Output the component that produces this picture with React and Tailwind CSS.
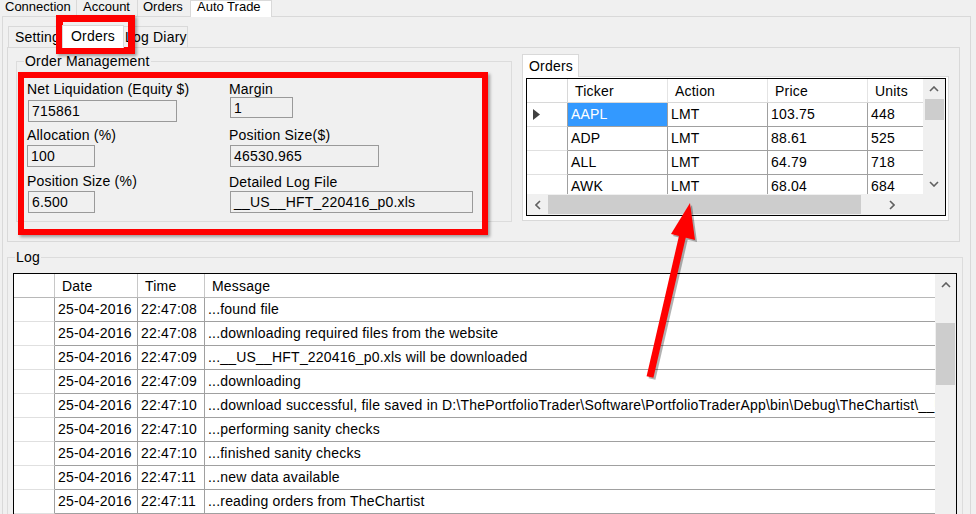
import React from 'react';

const font = "font-['Liberation_Sans',Arial,sans-serif]";

const ChevronUp = () => (
  <svg width="10" height="6" viewBox="0 0 10 6"><polyline points="1,5 5,1 9,5" fill="none" stroke="#606060" strokeWidth="1.6" /></svg>
);
const ChevronDown = () => (
  <svg width="10" height="6" viewBox="0 0 10 6"><polyline points="1,1 5,5 9,1" fill="none" stroke="#606060" strokeWidth="1.6" /></svg>
);
const ChevronLeft = () => (
  <svg width="6" height="10" viewBox="0 0 6 10"><polyline points="5,1 1,5 5,9" fill="none" stroke="#606060" strokeWidth="1.6" /></svg>
);
const ChevronRight = () => (
  <svg width="6" height="10" viewBox="0 0 6 10"><polyline points="1,1 5,5 1,9" fill="none" stroke="#606060" strokeWidth="1.6" /></svg>
);

const Field = ({ value, w, h = 'h-[22px]', mt }) => (
  <div className={`${w} ${h} ${mt} border border-[#9a9a9a] bg-[#f0f0f0] pl-[3px] flex items-center leading-none`}>
    {value}
  </div>
);

const orders = [
  ['AAPL', 'LMT', '103.75', '448'],
  ['ADP', 'LMT', '88.61', '525'],
  ['ALL', 'LMT', '64.79', '718'],
  ['AWK', 'LMT', '68.04', '684'],
];

const logs = [
  ['25-04-2016', '22:47:08', '...found file'],
  ['25-04-2016', '22:47:08', '...downloading required files from the website'],
  ['25-04-2016', '22:47:09', '...__US__HFT_220416_p0.xls will be downloaded'],
  ['25-04-2016', '22:47:09', '...downloading'],
  ['25-04-2016', '22:47:10', '...download successful, file saved in D:\\ThePortfolioTrader\\Software\\PortfolioTraderApp\\bin\\Debug\\TheChartist\\__US__HFT_220416_p0.xls'],
  ['25-04-2016', '22:47:10', '...performing sanity checks'],
  ['25-04-2016', '22:47:10', '...finished sanity checks'],
  ['25-04-2016', '22:47:11', '...new data available'],
  ['25-04-2016', '22:47:11', '...reading orders from TheChartist'],
  ['25-04-2016', '22:47:11', '...placing orders'],
];

export default function App() {
  return (
    <div className={`${font} relative w-[976px] h-[514px] overflow-hidden bg-[#f0f0f0] text-[14px] tracking-[0.2px] text-black`}>
      {/* top tabs */}
      <div className="flex items-end h-[16px] text-[13px] tracking-normal">
        <div className="w-[77px] h-[16px] border-r border-[#d9d9d9] pl-[5px] leading-[14px]">Connection</div>
        <div className="w-[61px] h-[16px] border-r border-[#d9d9d9] pl-[6px] leading-[14px]">Account</div>
        <div className="w-[52px] h-[16px] pl-[5px] leading-[14px]">Orders</div>
        <div className="relative z-10 w-[82px] h-[17px] -mb-px bg-white border border-b-0 border-[#d9d9d9] pl-[6px] leading-[12px]">Auto Trade</div>
      </div>

      {/* outer page */}
      <div className="ml-[2px] w-[969px] h-[500px] border border-[#d9d9d9] pl-[4px] pt-[7px]">
        {/* inner tabs */}
        <div className="flex items-end h-[23px]">
          <div className="ml-[1px] w-[56px] h-[21px] border border-b-0 border-[#d9d9d9] pl-[6px] leading-[20px]">Setting</div>
          <div className="relative z-10 -ml-[2px] w-[62px] h-[23px] -mb-px bg-white border border-b-0 border-[#d9d9d9] pl-[8px] leading-[20px]">Orders</div>
          <div className="-ml-[2px] w-[66px] h-[21px] border border-b-0 border-l-0 border-[#d9d9d9] pl-[3px] leading-[20px] whitespace-nowrap">Log Diary</div>
        </div>

        {/* inner page */}
        <div className="w-[953px] h-[195px] border border-[#d9d9d9] flex items-start">
          {/* Order Management group */}
          <div className="relative ml-[8px] mt-[13px] w-[496px] h-[161px] border border-[#dcdcdc] pl-[10px] pt-[19px] flex">
            <div className="absolute -top-[9px] left-[7px] bg-[#f0f0f0] px-[1px] leading-[16px]">Order Management</div>
            <div className="w-[202px] flex flex-col">
              <div className="h-[16px] leading-[16px] whitespace-nowrap">Net Liquidation (Equity $)</div>
              <Field value="715861" w="w-[149px] ml-[1px]" mt="mt-[3px]" />
              <div className="h-[16px] leading-[16px] mt-[5px]">Allocation (%)</div>
              <Field value="100" w="w-[68px]" mt="mt-[2px]" />
              <div className="h-[16px] leading-[16px] mt-[6px]">Position Size (%)</div>
              <Field value="6.500" w="w-[67px] ml-[1px]" mt="mt-[2px]" />
            </div>
            <div className="flex flex-col">
              <div className="h-[16px] leading-[16px]">Margin</div>
              <Field value="1" w="w-[63px] ml-[1px]" h="h-[21px]" mt="mt-0" />
              <div className="h-[16px] leading-[16px] mt-[9px]">Position Size($)</div>
              <Field value="46530.965" w="w-[149px] ml-[1px]" mt="mt-[2px]" />
              <div className="h-[16px] leading-[16px] mt-[7px]">Detailed Log File</div>
              <Field value="__US__HFT_220416_p0.xls" w="w-[243px] ml-[1px]" mt="mt-[1px]" />
            </div>
          </div>

          {/* Orders tab control */}
          <div className="ml-[10px] mt-[6px] w-[427px] flex flex-col">
            <div className="relative z-10 w-[57px] h-[23px] -mb-px bg-white border border-b-0 border-[#d9d9d9] pl-[6px] leading-[22px]">Orders</div>
            <div className="h-[145px] bg-white border border-[#d9d9d9] pl-[3px] pt-[1px]">
              <div className="w-[420px] h-[138px] border border-black flex flex-col bg-[#f0f0f0]">
                <div className="flex h-[115px]">
                  <div className="w-[396px] overflow-hidden bg-white">
                    <div className="flex h-[24px] border-b border-[#d8d8d8]">
                      <div className="w-[41px] shrink-0 border-r border-[#d8d8d8]" />
                      <div className="w-[100px] shrink-0 border-r border-[#e4e4e4] pl-[7px] leading-[24px]">Ticker</div>
                      <div className="w-[100px] shrink-0 border-r border-[#e4e4e4] pl-[7px] leading-[24px]">Action</div>
                      <div className="w-[100px] shrink-0 border-r border-[#e4e4e4] pl-[7px] leading-[24px]">Price</div>
                      <div className="w-[60px] shrink-0 pl-[7px] leading-[24px]">Units</div>
                    </div>
                    {orders.map((r, i) => (
                      <div key={r[0]} className="flex h-[24px]">
                        <div className="w-[41px] shrink-0 border-r border-b border-[#a0a0a0] border-b-[#e0e0e0] flex items-center pl-[6px]">
                          {i === 0 && (
                            <svg width="7" height="11" viewBox="0 0 7 11"><polygon points="0,0 7,5.5 0,11" fill="#404040" /></svg>
                          )}
                        </div>
                        <div className={`w-[100px] shrink-0 border-r border-b border-[#a0a0a0] pl-[3px] leading-[23px] ${i === 0 ? 'bg-[#3399ff] text-white' : ''}`}>{r[0]}</div>
                        <div className="w-[100px] shrink-0 border-r border-b border-[#a0a0a0] pl-[3px] leading-[23px]">{r[1]}</div>
                        <div className="w-[100px] shrink-0 border-r border-b border-[#a0a0a0] pl-[3px] leading-[23px]">{r[2]}</div>
                        <div className="w-[60px] shrink-0 border-b border-[#a0a0a0] pl-[3px] leading-[23px]">{r[3]}</div>
                      </div>
                    ))}
                  </div>
                  <div className="flex-1 flex flex-col items-center bg-[#f0f0f0]">
                    <div className="h-[20px] flex items-center justify-center"><ChevronUp /></div>
                    <div className="w-[19px] h-[21px] bg-[#cdcdcd]" />
                    <div className="flex-1" />
                    <div className="h-[20px] flex items-center justify-center"><ChevronDown /></div>
                  </div>
                </div>
                <div className="flex h-[21px] items-center">
                  <div className="w-[396px] h-full flex items-center">
                    <div className="w-[21px] flex justify-center"><ChevronLeft /></div>
                    <div className="w-[313px] h-[19px] bg-[#cdcdcd]" />
                    <div className="flex-1 flex justify-center"><ChevronRight /></div>
                  </div>
                </div>
              </div>
            </div>
          </div>
        </div>

        {/* Log group */}
        <div className="relative mt-[15px] w-[956px] h-[270px] border border-b-0 border-[#dcdcdc] pl-[5px] pt-[15px]">
          <div className="absolute -top-[9px] left-[7px] bg-[#f0f0f0] px-[1px] leading-[16px]">Log</div>
          <div className="w-[944px] h-[260px] border border-b-0 border-black flex bg-white">
            <div className="w-[921px] overflow-hidden">
              <div className="flex h-[24px] border-b border-[#b8b8b8]">
                <div className="w-[41px] shrink-0 border-r border-[#c8c8c8]" />
                <div className="w-[83px] shrink-0 border-r border-[#c8c8c8] pl-[7px] leading-[24px]">Date</div>
                <div className="w-[67px] shrink-0 border-r border-[#c8c8c8] pl-[7px] leading-[24px]">Time</div>
                <div className="flex-1 pl-[7px] leading-[24px]">Message</div>
              </div>
              {logs.map((r, i) => (
                <div key={i} className="flex h-[24px]">
                  <div className="w-[41px] shrink-0 border-r border-b border-[#a0a0a0] border-b-[#e0e0e0]" />
                  <div className="w-[83px] shrink-0 border-r border-b border-[#a0a0a0] pl-[3px] leading-[23px] whitespace-nowrap overflow-hidden">{r[0]}</div>
                  <div className="w-[67px] shrink-0 border-r border-b border-[#a0a0a0] pl-[3px] leading-[23px] whitespace-nowrap overflow-hidden">{r[1]}</div>
                  <div className="flex-1 min-w-0 border-b border-[#a0a0a0] pl-[3px] leading-[23px] whitespace-nowrap overflow-hidden">{r[2]}</div>
                </div>
              ))}
            </div>
            <div className="flex-1 flex flex-col items-center bg-[#f0f0f0]">
              <div className="h-[22px] flex items-center justify-center"><ChevronUp /></div>
              <div className="mt-[27px] w-[19px] h-[62px] bg-[#cdcdcd]" />
            </div>
          </div>
        </div>
      </div>

      {/* annotations */}
      <div className="absolute left-[56px] top-[15px] w-[79px] h-[39px] border-[7px] border-[#ff0000] shadow-[2px_2px_3px_rgba(0,0,0,0.35)]" />
      <div className="absolute left-[18px] top-[72px] w-[470px] h-[163px] border-[6px] border-[#ff0000] shadow-[2px_2px_3px_rgba(0,0,0,0.35)]" />
      <svg className="absolute left-0 top-0 pointer-events-none" width="976" height="514">
        <g transform="translate(2,2)" opacity="0.3">
          <line x1="650" y1="377" x2="683" y2="234" stroke="#000" strokeWidth="7" />
          <polygon points="690,203 671,234 695,240" fill="#000" />
        </g>
        <line x1="650" y1="377" x2="683" y2="234" stroke="#ff0000" strokeWidth="7" />
        <polygon points="690,203 671,234 695,240" fill="#ff0000" />
      </svg>
    </div>
  );
}
